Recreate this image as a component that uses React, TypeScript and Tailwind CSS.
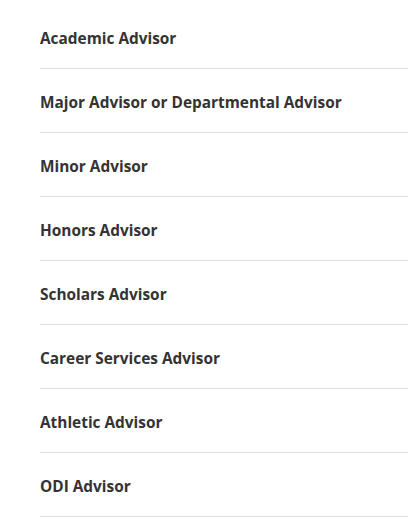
import React from 'react'

const advisors = [
  'Academic Advisor',
  'Major Advisor or Departmental Advisor',
  'Minor Advisor',
  'Honors Advisor',
  'Scholars Advisor',
  'Career Services Advisor',
  'Athletic Advisor',
  'ODI Advisor',
]

const App: React.FC = () => {
  return (
    <div className="min-h-[531px] bg-white pt-[5px] pl-10 font-['Open_Sans',sans-serif]">
      <ul>
        {advisors.map((name) => (
          <li
            key={name}
            className="h-16 flex items-center border-b border-[#dddddd] text-[15.4px] font-bold text-[#333333]"
          >
            <span className="pt-[4px]">{name}</span>
          </li>
        ))}
      </ul>
    </div>
  )
}

export default App
